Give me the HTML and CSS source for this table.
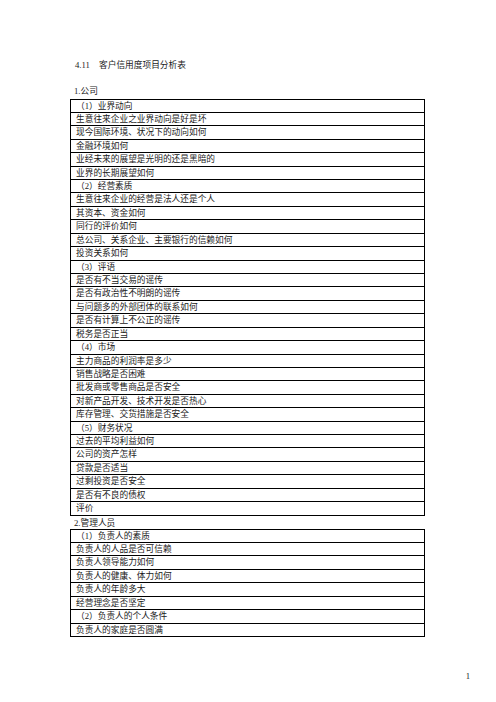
FILE: index.html
```html
<!DOCTYPE html>
<html lang="zh">
<head>
<meta charset="utf-8">
<title>客户信用度项目分析表</title>
<link rel="stylesheet" href="styles.css">
</head>
<body>
<div class="page">
  <div class="title"><span class="num">4.11</span>客户信用度项目分析表</div>
  <div class="sect">1.公司</div>
  <div class="table">
    <div class="row">（1）业界动向</div>
    <div class="row">生意往来企业之业界动向是好是坏</div>
    <div class="row">现今国际环境、状况下的动向如何</div>
    <div class="row">金融环境如何</div>
    <div class="row">业经未来的展望是光明的还是黑暗的</div>
    <div class="row">业界的长期展望如何</div>
    <div class="row">（2）经营素质</div>
    <div class="row">生意往来企业的经营是法人还是个人</div>
    <div class="row">其资本、资金如何</div>
    <div class="row">同行的评价如何</div>
    <div class="row">总公司、关系企业、主要银行的信赖如何</div>
    <div class="row">投资关系如何</div>
    <div class="row">（3）评语</div>
    <div class="row">是否有不当交易的谣传</div>
    <div class="row">是否有政治性不明朗的谣传</div>
    <div class="row">与问题多的外部团体的联系如何</div>
    <div class="row">是否有计算上不公正的谣传</div>
    <div class="row">税务是否正当</div>
    <div class="row">（4）市场</div>
    <div class="row">主力商品的利润率是多少</div>
    <div class="row">销售战略是否困难</div>
    <div class="row">批发商或零售商品是否安全</div>
    <div class="row">对新产品开发、技术开发是否热心</div>
    <div class="row">库存管理、交货措施是否安全</div>
    <div class="row">（5）财务状况</div>
    <div class="row">过去的平均利益如何</div>
    <div class="row">公司的资产怎样</div>
    <div class="row">贷款是否适当</div>
    <div class="row">过剩投资是否安全</div>
    <div class="row">是否有不良的债权</div>
    <div class="row">评价</div>
  </div>
  <div class="sect sect2">2.管理人员</div>
  <div class="table">
    <div class="row">（1）负责人的素质</div>
    <div class="row">负责人的人品是否可信赖</div>
    <div class="row">负责人领导能力如何</div>
    <div class="row">负责人的健康、体力如何</div>
    <div class="row">负责人的年龄多大</div>
    <div class="row">经营理念是否坚定</div>
    <div class="row">（2）负责人的个人条件</div>
    <div class="row">负责人的家庭是否圆满</div>
  </div>
  <div class="pageno">1</div>
</div>
</body>
</html>
```

FILE: styles.css
```css
html, body {
  margin: 0;
  padding: 0;
  background: #fff;
}

.page {
  padding: 59px 0 0 70px;
  width: 355px;
  font-family: "Liberation Serif", "Noto Sans CJK SC", serif;
  font-size: 8.7px;
  color: #1a1a1a;
}

.title {
  height: 13px;
  line-height: 13px;
  padding-left: 5px;
  margin-bottom: 13px;
}

.num {
  display: inline-block;
  width: 24px;
}

.sect {
  height: 13px;
  line-height: 13px;
  padding-left: 4px;
  margin-bottom: 0.5px;
}

.sect2 {
  margin-bottom: 0;
  height: 13px;
  line-height: 14px;
}

.table {
  border: 1px solid #000;
  border-bottom: none;
  display: flex;
  flex-direction: column;
}

.row {
  height: 12.43px;
  line-height: 12.43px;
  border-bottom: 1px solid #000;
  padding-left: 5px;
  white-space: nowrap;
}

.pageno {
  margin-top: 34px;
  text-align: right;
  margin-right: -45px;
  line-height: 10px;
}
```
